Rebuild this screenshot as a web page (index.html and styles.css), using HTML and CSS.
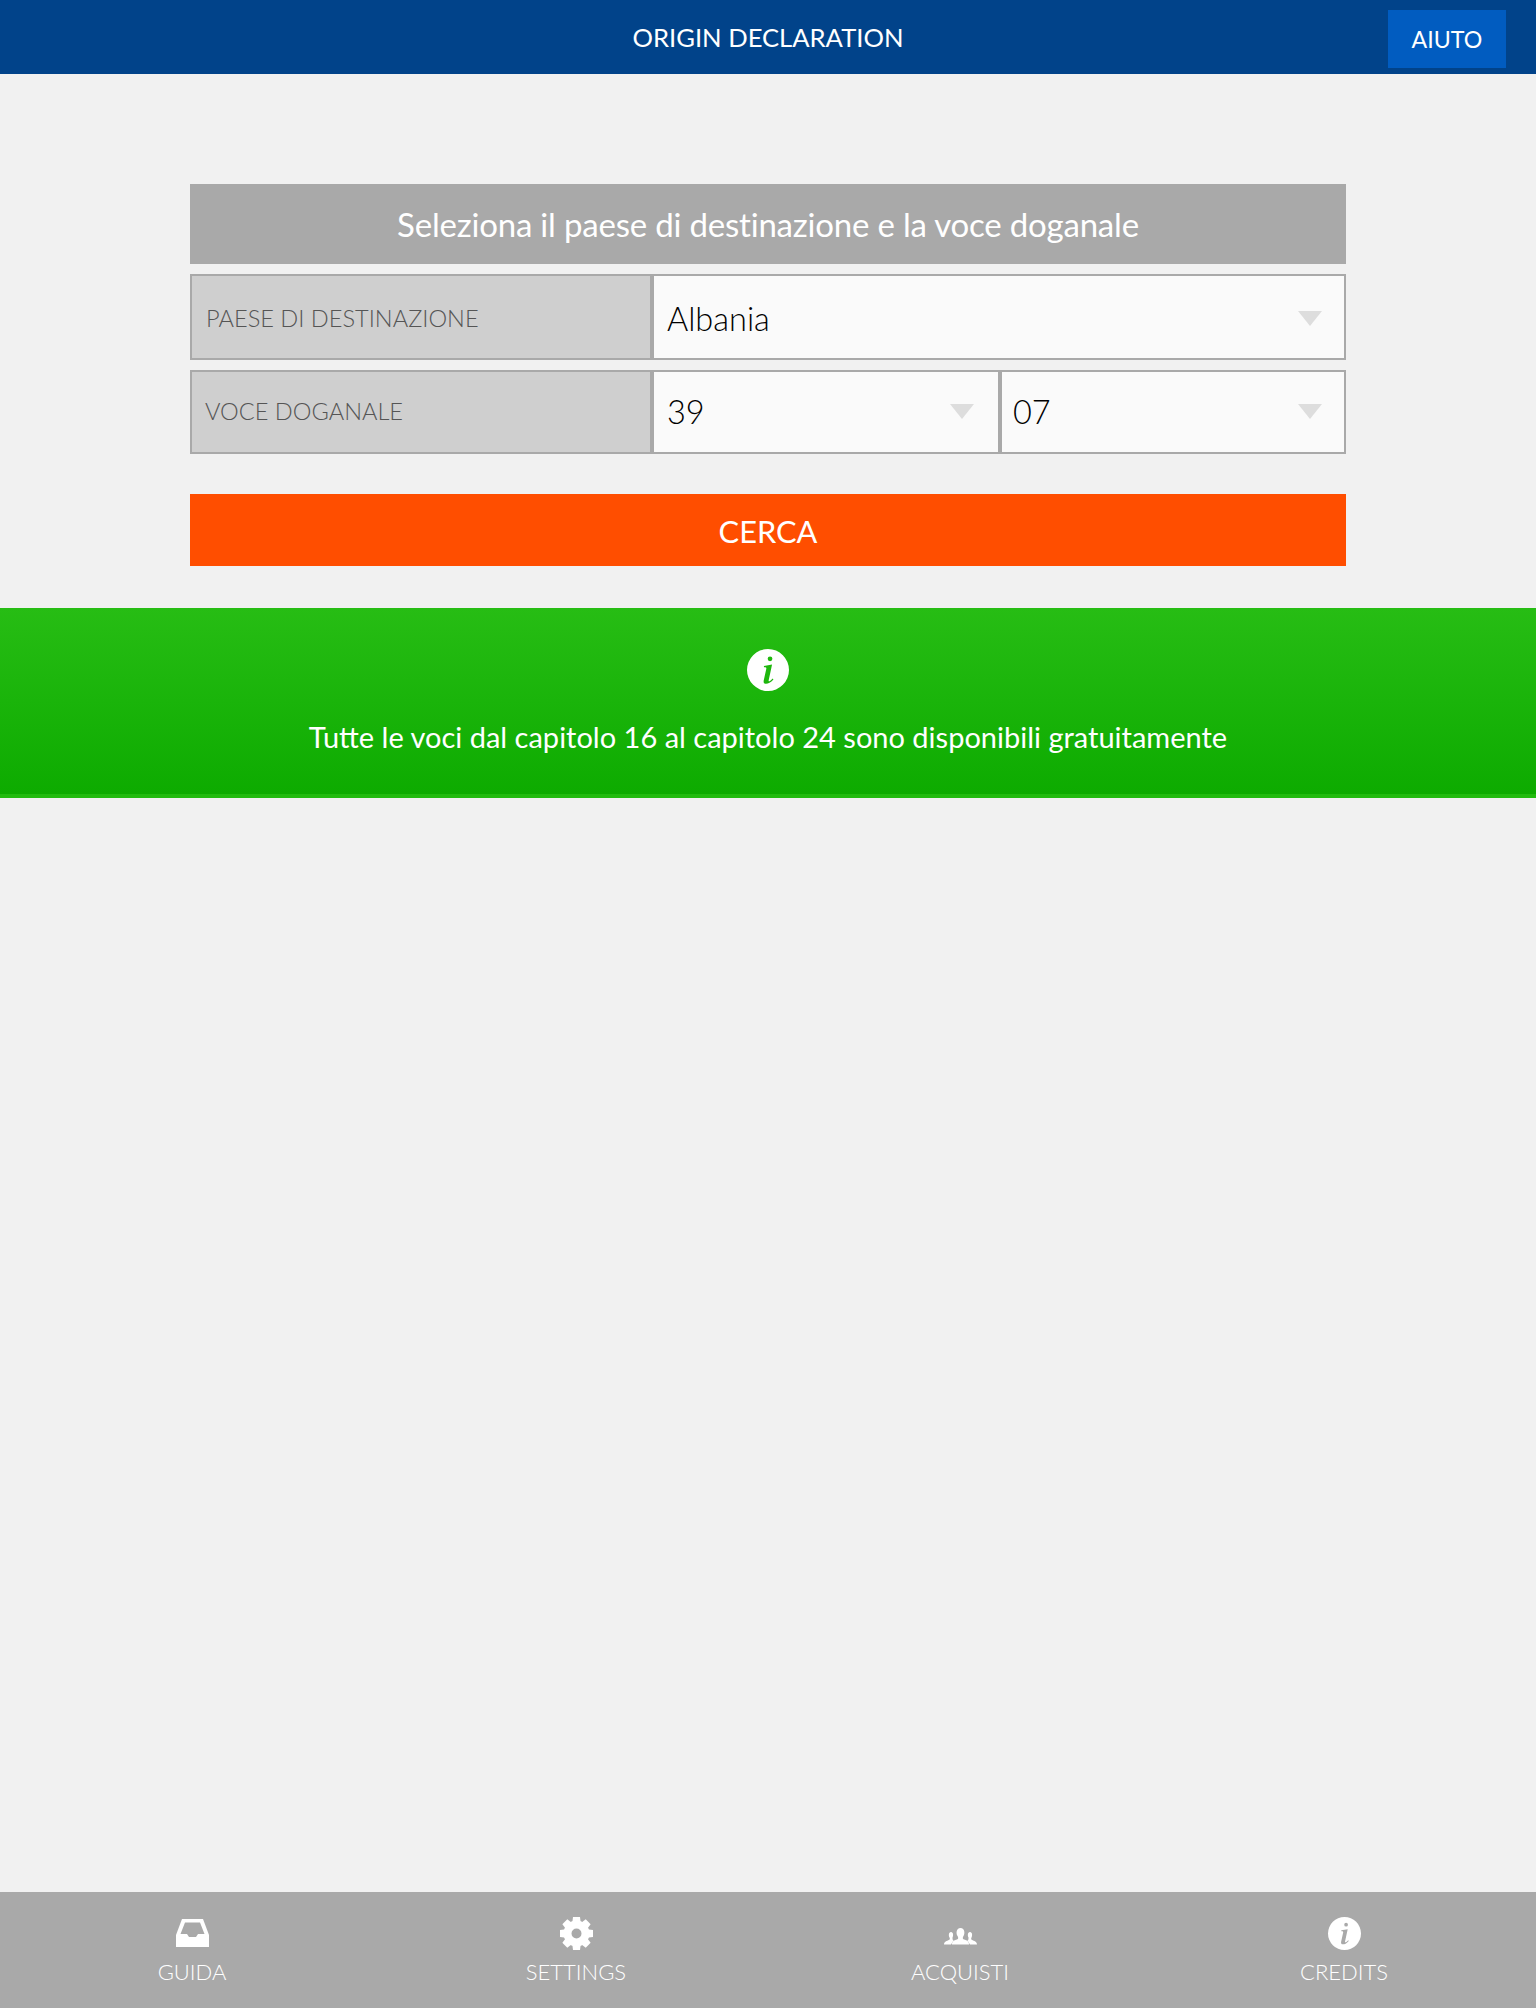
FILE: index.html
```html
<!DOCTYPE html>
<html lang="it">
<head>
<meta charset="utf-8">
<title>Origin Declaration</title>
<link rel="stylesheet" href="styles.css">
</head>
<body>
<svg class="defs" width="0" height="0" aria-hidden="true">
  <symbol id="i-info" viewBox="0 0 124 124">
    <path fill="currentColor" fill-rule="evenodd" d="M62 0a62 62 0 1 0 0 124a62 62 0 1 0 0-124ZM68 22a7 7 0 1 1 0 14a7 7 0 1 1 0-14ZM50 50L74 46L64 92C63 97 66 97 76 87L78 90C68 102 58 104 52 102C48 100 49 94 50 90L57 58C58 54 54 53 50 54Z"/>
  </symbol>
</svg>
<header class="topbar">
  <h1 class="topbar-title">ORIGIN DECLARATION</h1>
  <a class="help-btn">AIUTO</a>
</header>
<main class="content">
  <section class="form">
    <h2 class="form-title">Seleziona il paese di destinazione e la voce doganale</h2>
    <div class="form-row row-country">
      <div class="field-label">PAESE DI DESTINAZIONE</div>
      <div class="field-select span-2"><span>Albania</span><i class="caret"></i></div>
    </div>
    <div class="form-row row-code">
      <div class="field-label label-code">VOCE DOGANALE</div>
      <div class="field-select select-main"><span>39</span><i class="caret"></i></div>
      <div class="field-select select-sub"><span>07</span><i class="caret"></i></div>
    </div>
    <button class="search-btn">CERCA</button>
  </section>
  <section class="notice">
    <svg class="notice-icon"><use href="#i-info"/></svg>
    <p class="notice-text">Tutte le voci dal capitolo 16 al capitolo 24 sono disponibili gratuitamente</p>
  </section>
</main>
<nav class="tabbar">
  <a class="tab">
    <svg class="tab-icon" viewBox="0 0 33 33"><path fill="currentColor" fill-rule="evenodd" d="M6 2H27L33 18V30H0V18ZM9 5.500L4.500 17H11L13 20H20L22 17H28.500L24 5.500Z"/></svg>
    <span>GUIDA</span>
  </a>
  <a class="tab">
    <svg class="tab-icon" viewBox="0 0 33 33">
      <circle cx="16.500" cy="16.500" r="9" fill="none" stroke="currentColor" stroke-width="8"/>
      <g fill="currentColor">
        <path d="M13 0H20L21 8H12Z"/>
        <path d="M13 0H20L21 8H12Z" transform="rotate(45 16.500 16.500)"/>
        <path d="M13 0H20L21 8H12Z" transform="rotate(90 16.500 16.500)"/>
        <path d="M13 0H20L21 8H12Z" transform="rotate(135 16.500 16.500)"/>
        <path d="M13 0H20L21 8H12Z" transform="rotate(180 16.500 16.500)"/>
        <path d="M13 0H20L21 8H12Z" transform="rotate(225 16.500 16.500)"/>
        <path d="M13 0H20L21 8H12Z" transform="rotate(270 16.500 16.500)"/>
        <path d="M13 0H20L21 8H12Z" transform="rotate(315 16.500 16.500)"/>
      </g>
    </svg>
    <span>SETTINGS</span>
  </a>
  <a class="tab">
    <svg class="tab-icon" viewBox="0 0 33 33">
      <g fill="currentColor">
        <path d="M0 27.500C0 24.500 3 24 5 23C6 22.500 6 21.500 5.500 20.500C4.500 19 4.500 15 7 15C9.500 15 9.500 19 8.500 20.500C8.500 22 8.500 23 9.500 23.500L7 27.500Z"/>
        <path d="M33 27.500C33 24.500 30 24 28 23C27 22.500 27 21.500 27.500 20.500C28.500 19 28.500 15 26 15C23.500 15 23.500 19 24.500 20.500C24.500 22 24.500 23 23.500 23.500L26 27.500Z"/>
        <path d="M8 27.500C8 24 10 23.500 13 22.500C14.500 22 14.500 20.500 13.500 19C12 17 12 11 16.500 11C21 11 21 17 19.500 19C18.500 20.500 18.500 22 20 22.500C23 23.500 25 24 25 27.500Z"/>
      </g>
    </svg>
    <span>ACQUISTI</span>
  </a>
  <a class="tab">
    <svg class="tab-icon"><use href="#i-info"/></svg>
    <span>CREDITS</span>
  </a>
</nav>
</body>
</html>
```
FILE: styles.css
```css
* { box-sizing: border-box; }
html, body { margin: 0; height: 100%; }
body {
  display: flex;
  flex-direction: column;
  min-height: 2008px;
  background: #f1f1f1;
  font-family: Lato, "Liberation Sans", sans-serif;
  color: #fff;
}
.defs { position: absolute; }

.topbar {
  position: relative;
  height: 74px;
  background: #01438a;
  display: flex;
  align-items: center;
  justify-content: center;
}
.topbar-title { margin: 0; font-size: 25.600px; font-weight: 400; line-height: 74px; }
.help-btn {
  position: absolute;
  top: 10px;
  right: 30px;
  width: 118px;
  height: 58px;
  background: #015cc0;
  font-size: 23.200px;
  display: flex;
  align-items: center;
  justify-content: center;
}

.content { flex: 1; padding-top: 110px; }
.form { width: 1156px; margin: 0 auto; }
.form-title {
  margin: 0 0 10px;
  height: 80px;
  line-height: 80px;
  background: #a9a9a9;
  text-align: center;
  font-size: 33px;
  font-weight: 400;
  letter-spacing: -0.200px;
}
.form-row { display: grid; grid-template-columns: 462px 348px 1fr; margin-bottom: 10px; }
.row-country { height: 86px; }
.row-country .field-label, .row-country .field-select { padding-top: 2px; }
.row-code { height: 84px; margin-bottom: 40px; }
.row-code .field-label, .row-code .field-select { padding-bottom: 2px; }
.field-label {
  display: flex;
  align-items: center;
  padding-left: 14px;
  background: #cfcfcf;
  border: 2px solid #a9a9a9;
  color: #555;
  font-size: 23.600px;
  font-weight: 300;
}
.label-code { padding-left: 13px; }
.field-select {
  display: flex;
  align-items: center;
  justify-content: space-between;
  padding: 0 22px 0 13px;
  background: #fafafa;
  border: 2px solid #a9a9a9;
  color: #000;
  font-size: 32.500px;
  font-weight: 300;
}
.select-main { padding-right: 24px; }
.select-sub { padding-left: 11px; }
.span-2 { grid-column: span 2; }
.caret {
  width: 0;
  height: 0;
  border-left: 12px solid transparent;
  border-right: 12px solid transparent;
  border-top: 15px solid #ddd;
}
.search-btn {
  display: block;
  width: 100%;
  height: 72px;
  padding: 2px 0 0;
  border: 0;
  background: #ff4e00;
  color: #fff;
  font-family: inherit;
  font-size: 30.800px;
}

.notice {
  margin-top: 42px;
  height: 190px;
  padding-top: 41px;
  background: linear-gradient(#27bd14, #0dab00);
  border-bottom: 4px solid #22bb0f;
  text-align: center;
}
.notice-icon { display: block; width: 42px; height: 42px; margin: 0 auto; color: #fff; }
.notice-text { margin: 28px 0 0; font-size: 29px; line-height: 36px; }

.tabbar {
  height: 116px;
  background: #a9a9a9;
  display: grid;
  grid-template-columns: repeat(4, 1fr);
}
.tab {
  display: flex;
  flex-direction: column;
  align-items: center;
  padding-top: 25px;
  font-size: 22px;
  font-weight: 300;
}
.tab-icon { width: 33px; height: 33px; color: #fff; margin-bottom: 7px; }
.tab span { line-height: 30px; }
```
